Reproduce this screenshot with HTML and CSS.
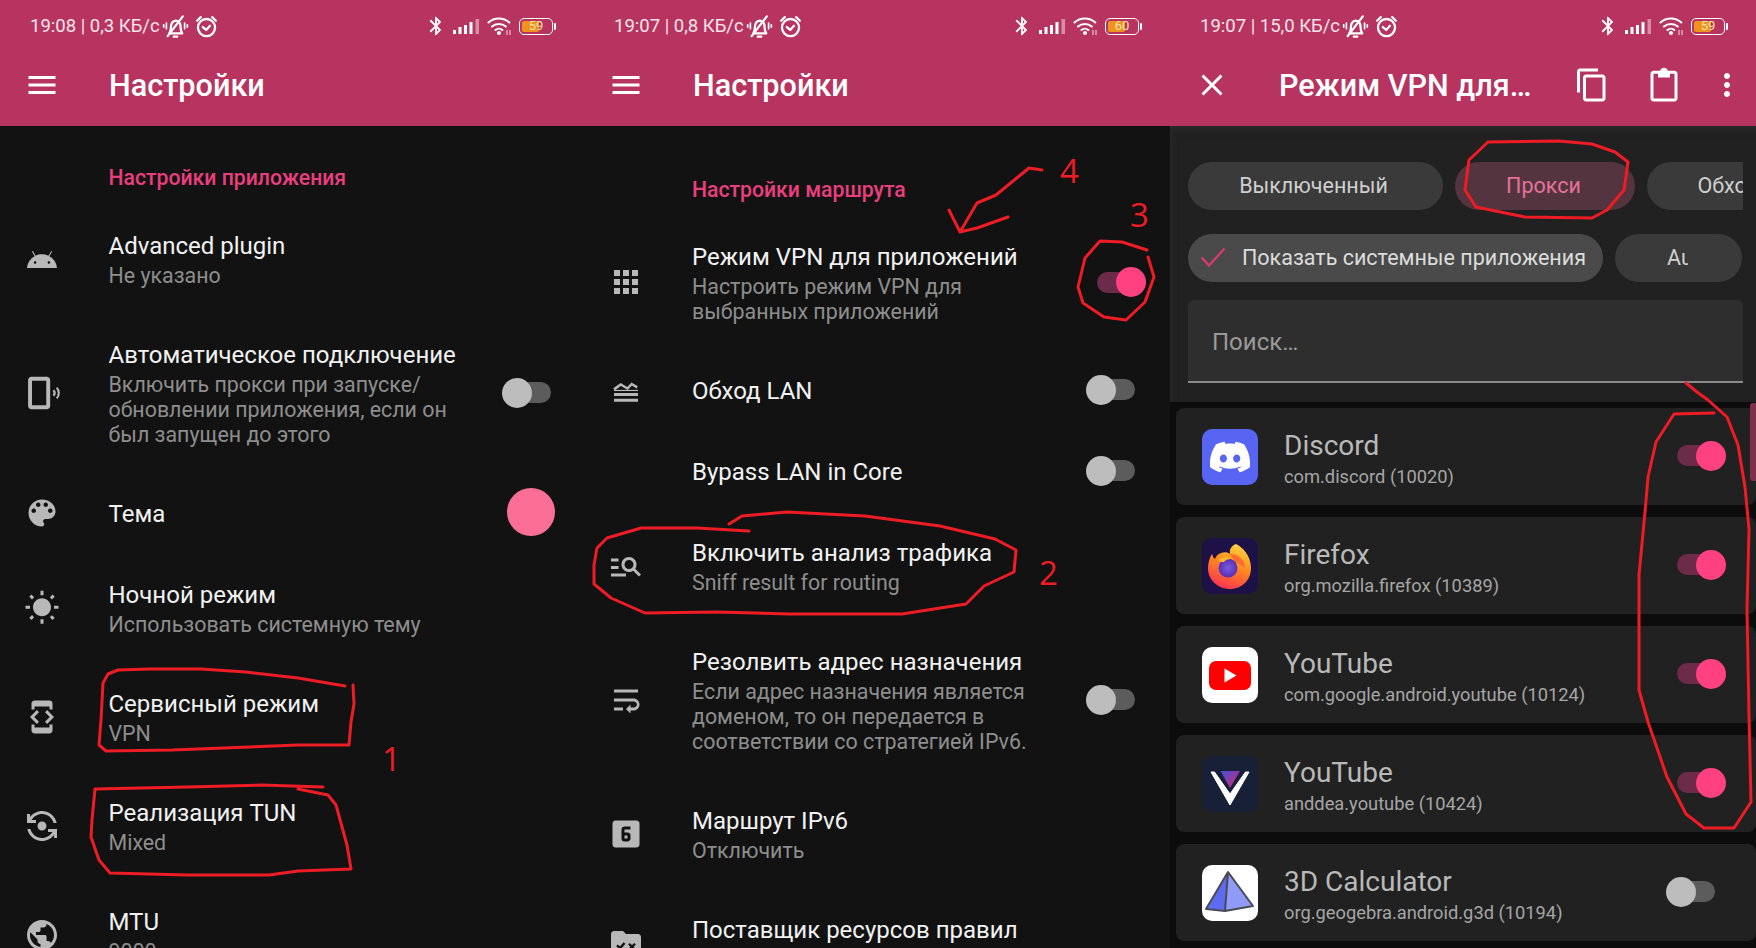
FILE: index.html
```html
<!DOCTYPE html>
<html lang="ru">
<head>
<meta charset="utf-8">
<title>Настройки</title>
<link rel="stylesheet" href="styles.css">
</head>
<body>
<svg class="defs" aria-hidden="true">
  <symbol id="i-menu" viewBox="0 0 24 24"><path d="M3 18h18v-2H3v2zm0-5h18v-2H3v2zm0-7v2h18V6H3z"/></symbol>
  <symbol id="i-bt" viewBox="0 0 24 24"><path d="M17.71 7.71L12 2h-1v7.59L6.41 5 5 6.41 10.59 12 5 17.59 6.41 19 11 14.41V22h1l5.71-5.71-4.3-4.29 4.3-4.29zM13 5.83l1.88 1.88L13 9.59V5.83zm1.88 10.46L13 18.17v-3.76l1.88 1.88z"/></symbol>
  <symbol id="i-belloff" viewBox="0 0 24 24"><g fill="none" stroke="#fff" stroke-width="2" stroke-linecap="round" stroke-linejoin="round"><path d="M6.5 18c1-1.500 1.400-3.200 1.400-5.200 0-3.300 1.800-5.600 4.300-6 2.700.2 4.300 2.500 4.300 5.800 0 2.200.3 3.900 1.500 5.400z"/><path d="M10.400 21h3.200"/><path d="M5 20.500 18.500 3"/><path d="M3.900 9v5M1.500 10.500v2M20.100 9v5M22.500 10.500v2" stroke-width="1.500"/></g></symbol>
  <symbol id="i-alarm" viewBox="0 0 24 24"><g fill="none" stroke="#fff" stroke-width="2.200" stroke-linecap="round" stroke-linejoin="round"><circle cx="12" cy="13" r="8.200"/><path d="M8.500 12.500l3.200 2.800 3.600-4"/><path d="M3 6.500 6.500 3M21 6.500 17.500 3"/></g></symbol>
  <symbol id="i-signal" viewBox="0 0 26 15"><path fill="#fff" d="M0 11h3v4H0zM5.500 8h3v7h-3zM11 6h3v9h-3zM16.500 3h3v12h-3z"/><path fill="#fff" opacity=".45" d="M22.500 0H26v15h-3.500z"/></symbol>
  <symbol id="i-wifi" viewBox="0 0 24 20"><g fill="none" stroke="#fff" stroke-width="2.100" stroke-linecap="round"><path d="M1.500 6.500c5.800-5.400 15-5.400 20.800 0"/><path d="M5 10.500c3.800-3.400 10-3.400 13.800 0"/><path d="M8.500 14c2-1.700 4.900-1.700 6.800 0"/></g><circle cx="12" cy="17" r="2" fill="#fff"/><path d="M20 14v5M23 14v5" stroke="#fff" stroke-width="1.200" opacity=".7"/></symbol>
  <symbol id="i-android" viewBox="0 0 24 24"><path d="M16.610 15.150C16.150 15.150 15.770 14.780 15.770 14.320S16.150 13.500 16.610 13.500H16.610C17.070 13.500 17.450 13.860 17.450 14.320C17.450 14.780 17.070 15.150 16.610 15.150M7.410 15.150C6.950 15.150 6.570 14.780 6.570 14.320C6.570 13.860 6.950 13.500 7.410 13.500H7.410C7.870 13.500 8.240 13.860 8.240 14.320C8.240 14.780 7.870 15.150 7.410 15.150M16.910 10.140L18.580 7.260C18.670 7.090 18.610 6.880 18.450 6.790C18.280 6.690 18.070 6.750 18 6.920L16.290 9.830C14.950 9.220 13.500 8.900 12 8.910C10.470 8.910 9 9.240 7.730 9.820L6.040 6.910C5.950 6.740 5.740 6.680 5.570 6.780C5.400 6.870 5.350 7.080 5.440 7.250L7.100 10.130C4.250 11.690 2.290 14.580 2 18H22C21.720 14.590 19.770 11.700 16.910 10.140H16.910Z"/></symbol>
  <symbol id="i-phone" viewBox="1 1.200 22 21.600"><path fill-rule="evenodd" d="M5.500 2h9.500c1 0 2 .9 2 2v16c0 1.100-1 2-2 2H5.500c-1 0-2-.9-2-2V4c0-1.100 1-2 2-2zm.4 2.500v15h8.700v-15z"/><path d="M19 10.300c.9 1 .9 2.400 0 3.400M21 8.700c1.700 1.900 1.700 4.700 0 6.600" fill="none" stroke="#b8b8b8" stroke-width="1.300"/></symbol>
  <symbol id="i-palette" viewBox="0 0 24 24"><path d="M12 3c-4.970 0-9 4.030-9 9s4.030 9 9 9c.830 0 1.500-.670 1.500-1.500 0-.390-.150-.740-.390-1.010-.230-.260-.380-.610-.380-.990 0-.830.670-1.500 1.500-1.500H16c2.760 0 5-2.240 5-5 0-4.420-4.030-8-9-8zm-5.500 9c-.830 0-1.500-.670-1.500-1.500S5.670 9 6.500 9 8 9.670 8 10.500 7.330 12 6.500 12zm3-4C8.670 8 8 7.330 8 6.500S8.670 5 9.500 5s1.500.670 1.500 1.500S10.330 8 9.500 8zm5 0c-.830 0-1.500-.670-1.500-1.500S13.670 5 14.500 5s1.500.670 1.500 1.500S15.330 8 14.500 8zm3 4c-.830 0-1.500-.670-1.500-1.500S16.670 9 17.500 9s1.500.670 1.500 1.500-.670 1.500-1.500 1.500z"/></symbol>
  <symbol id="i-sun" viewBox="0 0 24 24"><path d="M6.760 4.840l-1.800-1.790-1.410 1.410 1.790 1.790 1.420-1.410zM4 10.500H1v2h3v-2zm9-9.950h-2V3.500h2V.55zm7.450 3.910l-1.410-1.410-1.790 1.790 1.410 1.410 1.790-1.790zm-3.210 13.700l1.790 1.800 1.410-1.410-1.800-1.790-1.400 1.400zM20 10.500v2h3v-2h-3zm-8-5c-3.310 0-6 2.690-6 6s2.690 6 6 6 6-2.690 6-6-2.690-6-6-6zm-1 16.950h2V19.500h-2v2.950zm-7.450-3.910l1.410 1.410 1.790-1.800-1.410-1.410-1.790 1.800z"/></symbol>
  <symbol id="i-dev" viewBox="0 0 24 24"><path d="M7 5h10v2h2V3c0-1.100-.9-1.990-2-1.990L7 1c-1.100 0-2 .9-2 2v4h2V5zm8.410 11.590L20 12l-4.590-4.590L14 8.830 17.170 12 14 15.170l1.410 1.420zM10 15.170L6.830 12 10 8.830 8.590 7.410 4 12l4.590 4.590L10 15.170zM17 19H7v-2H5v4c0 1.100.9 2 2 2h10c1.100 0 2-.9 2-2v-4h-2v2z"/></symbol>
  <symbol id="i-flip" viewBox="0 0 24 24"><path d="M9,12c0,1.660,1.340,3,3,3s3-1.340,3-3s-1.340-3-3-3S9,10.340,9,12z M8,10V8H5.090C6.470,5.610,9.050,4,12,4c3.720,0,6.850,2.560,7.740,6h2.060 c-0.930-4.560-4.960-8-9.800-8C8.730,2,5.820,3.580,4,6.010V4H2v6H8z M16,14v2h2.910c-1.380,2.390-3.960,4-6.910,4c-3.720,0-6.850-2.560-7.740-6H2.200 c0.930,4.560,4.960,8,9.800,8c3.270,0,6.180-1.580,8-4.010V20h2v-6H16z"/></symbol>
  <symbol id="i-globe" viewBox="0 0 24 24"><path d="M12 2C6.480 2 2 6.480 2 12s4.480 10 10 10 10-4.480 10-10S17.520 2 12 2zm-1 17.930c-3.950-.490-7-3.850-7-7.930 0-.620.080-1.210.210-1.790L9 15v1c0 1.100.9 2 2 2v1.930zm6.900-2.540c-.260-.810-1-1.390-1.900-1.390h-1v-3c0-.550-.450-1-1-1H8v-2h2c.550 0 1-.450 1-1V7h2c1.100 0 2-.9 2-2v-.410c2.930 1.190 5 4.060 5 7.410 0 2.080-.8 3.970-2.100 5.390z"/></symbol>
  <symbol id="i-apps" viewBox="0 0 24 24"><path d="M4 8h4V4H4v4zm6 12h4v-4h-4v4zm-6 0h4v-4H4v4zm0-6h4v-4H4v4zm6 0h4v-4h-4v4zm6-10v4h4V4h-4zm-6 4h4V4h-4v4zm6 6h4v-4h-4v4zm0 6h4v-4h-4v4z"/></symbol>
  <symbol id="i-lan" viewBox="0 0 24 24"><path d="M4 14h16v2H4zM4 17.800h16v2H4z"/><path d="M4 11.600 8.500 8.300l4.500 2.700 2.800-3 3.700 2.200" fill="none" stroke="#b8b8b8" stroke-width="1.700"/><path d="M4 12.300h16" stroke="#b8b8b8" stroke-width=".8"/></symbol>
  <symbol id="i-sniff" viewBox="0 0 24 24"><path d="M7 9H2V7h5v2zm0 3H2v2h5v-2zm13.590 7l-3.830-3.830c-.8.520-1.740.830-2.760.830-2.760 0-5-2.240-5-5s2.240-5 5-5 5 2.240 5 5c0 1.020-.310 1.960-.830 2.750L22 17.590 20.590 19zM17 11c0-1.650-1.350-3-3-3s-3 1.350-3 3 1.350 3 3 3 3-1.350 3-3zM2 19h10v-2H2v2z"/></symbol>
  <symbol id="i-wrap" viewBox="0 0 24 24"><path d="M4 19h6v-2H4v2zM20 5H4v2h16V5zm-3 6H4v2h13.250c1.100 0 2 .9 2 2s-.9 2-2 2H15v-2l-3 3 3 3v-2h2c2.210 0 4-1.790 4-4s-1.790-4-4-4z"/></symbol>
  <symbol id="i-six" viewBox="0 0 24 24"><path d="M19,3H5C3.900,3 3,3.900 3,5V19C3,20.100 3.900,21 5,21H19C20.100,21 21,20.100 21,19V5C21,3.900 20.100,3 19,3M15,9H11V11H13A2,2 0 0,1 15,13V15C15,16.110 14.100,17 13,17H11A2,2 0 0,1 9,15V9C9,7.890 9.900,7 11,7H15V9M11,15H13V13H11V15Z"/></symbol>
  <symbol id="i-folder" viewBox="0 0 24 24"><path d="M10 4H4c-1.100 0-2 .9-2 2v12c0 1.100.9 2 2 2h16c1.100 0 2-.9 2-2V8c0-1.100-.9-2-2-2h-8l-2-2z"/><path d="M6 13.500l2 2 3-3.500M14 12.500l4 4M18 12.500l-4 4" fill="none" stroke="#121212" stroke-width="1.600"/></symbol>
</svg>

<main class="app">

  <section class="panel">
    <header class="head">
      <div class="status">
        <span class="status-text">19:08 | 0,3 КБ/с</span>
        <svg class="st-bell"><use href="#i-belloff"/></svg>
        <svg class="st-alarm"><use href="#i-alarm"/></svg>
        <div class="status-right">
          <svg class="st-bt"><use href="#i-bt"/></svg>
          <svg class="st-signal"><use href="#i-signal"/></svg>
          <svg class="st-wifi"><use href="#i-wifi"/></svg>
          <div class="batt"><div class="batt-body"><div class="batt-fill fill-59"></div><span class="batt-num">59</span></div><div class="batt-nub"></div></div>
        </div>
      </div>
      <div class="toolbar">
        <svg class="tb-icon"><use href="#i-menu"/></svg>
        <h1 class="tb-title">Настройки</h1>
      </div>
    </header>
    <h2 class="section sec-app">Настройки приложения</h2>
    <div class="row">
      <svg class="ico"><use href="#i-android"/></svg>
      <div class="txt"><div class="t">Advanced plugin</div><div class="s">Не указано</div></div>
    </div>
    <div class="row">
      <svg class="ico"><use href="#i-phone"/></svg>
      <div class="txt"><div class="t">Автоматическое подключение</div><div class="s">Включить прокси при запуске/<br>обновлении приложения, если он<br>был запущен до этого</div></div>
      <div class="switch"><span class="track"></span><span class="knob"></span></div>
    </div>
    <div class="row">
      <svg class="ico"><use href="#i-palette"/></svg>
      <div class="txt"><div class="t">Тема</div></div>
      <div class="swatch"></div>
    </div>
    <div class="row">
      <svg class="ico"><use href="#i-sun"/></svg>
      <div class="txt"><div class="t">Ночной режим</div><div class="s">Использовать системную тему</div></div>
    </div>
    <div class="row">
      <svg class="ico"><use href="#i-dev"/></svg>
      <div class="txt"><div class="t">Сервисный режим</div><div class="s">VPN</div></div>
    </div>
    <div class="row">
      <svg class="ico"><use href="#i-flip"/></svg>
      <div class="txt"><div class="t">Реализация TUN</div><div class="s">Mixed</div></div>
    </div>
    <div class="row">
      <svg class="ico"><use href="#i-globe"/></svg>
      <div class="txt"><div class="t">MTU</div><div class="s">9000</div></div>
    </div>
  </section>

  <section class="panel panel-wide panel-route">
    <header class="head">
      <div class="status">
        <span class="status-text">19:07 | 0,8 КБ/с</span>
        <svg class="st-bell"><use href="#i-belloff"/></svg>
        <svg class="st-alarm"><use href="#i-alarm"/></svg>
        <div class="status-right">
          <svg class="st-bt"><use href="#i-bt"/></svg>
          <svg class="st-signal"><use href="#i-signal"/></svg>
          <svg class="st-wifi"><use href="#i-wifi"/></svg>
          <div class="batt"><div class="batt-body"><div class="batt-fill fill-60"></div><span class="batt-num">60</span></div><div class="batt-nub"></div></div>
        </div>
      </div>
      <div class="toolbar">
        <svg class="tb-icon"><use href="#i-menu"/></svg>
        <h1 class="tb-title">Настройки</h1>
      </div>
    </header>
    <h2 class="section sec-route">Настройки маршрута</h2>
    <div class="row">
      <svg class="ico"><use href="#i-apps"/></svg>
      <div class="txt"><div class="t">Режим VPN для приложений</div><div class="s">Настроить режим VPN для<br>выбранных приложений</div></div>
      <div class="switch on"><span class="track"></span><span class="knob"></span></div>
    </div>
    <div class="row">
      <svg class="ico"><use href="#i-lan"/></svg>
      <div class="txt"><div class="t">Обход LAN</div></div>
      <div class="switch"><span class="track"></span><span class="knob"></span></div>
    </div>
    <div class="row">
      <svg class="ico"></svg>
      <div class="txt"><div class="t">Bypass LAN in Core</div></div>
      <div class="switch"><span class="track"></span><span class="knob"></span></div>
    </div>
    <div class="row">
      <svg class="ico"><use href="#i-sniff"/></svg>
      <div class="txt"><div class="t">Включить анализ трафика</div><div class="s">Sniff result for routing</div></div>
    </div>
    <div class="row">
      <svg class="ico"><use href="#i-wrap"/></svg>
      <div class="txt"><div class="t">Резолвить адрес назначения</div><div class="s">Если адрес назначения является<br>доменом, то он передается в<br>соответствии со стратегией IPv6.</div></div>
      <div class="switch"><span class="track"></span><span class="knob"></span></div>
    </div>
    <div class="row">
      <svg class="ico"><use href="#i-six"/></svg>
      <div class="txt"><div class="t">Маршрут IPv6</div><div class="s">Отключить</div></div>
    </div>
    <div class="row">
      <svg class="ico"><use href="#i-folder"/></svg>
      <div class="txt"><div class="t">Поставщик ресурсов правил</div><div class="s">Встроенный</div></div>
    </div>
  </section>

  <section class="panel panel-wide panel-apps">
    <header class="head">
      <div class="status">
        <span class="status-text">19:07 | 15,0 КБ/с</span>
        <svg class="st-bell"><use href="#i-belloff"/></svg>
        <svg class="st-alarm"><use href="#i-alarm"/></svg>
        <div class="status-right">
          <svg class="st-bt"><use href="#i-bt"/></svg>
          <svg class="st-signal"><use href="#i-signal"/></svg>
          <svg class="st-wifi"><use href="#i-wifi"/></svg>
          <div class="batt"><div class="batt-body"><div class="batt-fill fill-59"></div><span class="batt-num">59</span></div><div class="batt-nub"></div></div>
        </div>
      </div>
      <div class="toolbar">
        <svg class="tb-icon" viewBox="0 0 24 24"><path d="M19 6.410L17.590 5 12 10.590 6.410 5 5 6.410 10.590 12 5 17.590 6.410 19 12 13.410 17.590 19 19 17.590 13.410 12z"/></svg>
        <h1 class="tb-title tb-title-apps">Режим VPN для…</h1>
        <svg class="tb-icon act-copy" viewBox="0 0 24 24"><path d="M16 1H4c-1.100 0-2 .9-2 2v14h2V3h12V1zm3 4H8c-1.100 0-2 .9-2 2v14c0 1.100.9 2 2 2h11c1.100 0 2-.9 2-2V7c0-1.100-.9-2-2-2zm0 16H8V7h11v14z"/></svg>
        <svg class="tb-icon act-paste" viewBox="0 0 24 24"><path d="M19 2.500h-4.400C14.200 1.300 13.200.5 12 .5s-2.200.8-2.600 2H5c-1.100 0-2 .9-2 2V21c0 1.100.9 2 2 2h14c1.100 0 2-.9 2-2V4.500c0-1.100-.9-2-2-2zM19 21H5V4.500h3V7h8V4.500h3z"/></svg>
        <svg class="tb-icon act-more" viewBox="0 0 24 24"><path d="M12 8c1.100 0 2-.9 2-2s-.9-2-2-2-2 .9-2 2 .9 2 2 2zm0 2c-1.100 0-2 .9-2 2s.9 2 2 2 2-.9 2-2-.9-2-2-2zm0 6c-1.100 0-2 .9-2 2s.9 2 2 2 2-.9 2-2-.9-2-2-2z"/></svg>
      </div>
    </header>

    <div class="filters">
      <div class="chips">
        <div class="chip chip-off">Выключенный</div>
        <div class="chip chip-proxy">Прокси</div>
        <div class="chip chip-bypass">Обход</div>
      </div>
      <div class="chips chips-2">
        <div class="chip chip-sys">
          <svg class="chk" viewBox="0 0 26 20"><path d="M1.500 10.500 9 18.500 24.500 1.500"/></svg>
          Показать системные приложения
        </div>
        <div class="chip chip-au"><span class="clip">Auto</span></div>
      </div>
      <div class="search">Поиск…</div>
    </div>

    <div class="apps">
      <article class="card">
        <svg class="app-ico" viewBox="0 0 56 56"><rect width="56" height="56" rx="10" fill="#5865f2"/><g transform="translate(8 8) scale(1.670)"><path fill="#fff" d="M20.317 4.3698a19.7913 19.7913 0 00-4.8851-1.5152.0741.0741 0 00-.0785.0371c-.211.3753-.4447.8648-.6083 1.2495-1.8447-.2762-3.68-.2762-5.4868 0-.1636-.3933-.4058-.8742-.6177-1.2495a.077.077 0 00-.0785-.037 19.7363 19.7363 0 00-4.8852 1.515.0699.0699 0 00-.0321.0277C.5334 9.0458-.319 13.5799.0992 18.0578a.0824.0824 0 00.0312.0561c2.0528 1.5076 4.0413 2.4228 5.9929 3.0294a.0777.0777 0 00.0842-.0276c.4616-.6304.8731-1.2952 1.226-1.9942a.076.076 0 00-.0416-.1057c-.6528-.2476-1.2743-.5495-1.8722-.8923a.077.077 0 01-.0076-.1277c.1258-.0943.2517-.1923.3718-.2914a.0743.0743 0 01.0776-.0105c3.9278 1.7933 8.18 1.7933 12.0614 0a.0739.0739 0 01.0785.0095c.1202.099.246.1981.3728.2924a.077.077 0 01-.0066.1276 12.2986 12.2986 0 01-1.873.8914.0766.0766 0 00-.0407.1067c.3604.698.7719 1.3628 1.225 1.9932a.076.076 0 00.0842.0286c1.961-.6067 3.9495-1.5219 6.0023-3.0294a.077.077 0 00.0313-.0552c.5004-5.177-.8382-9.6739-3.5485-13.6604a.061.061 0 00-.0312-.0286zM8.02 15.3312c-1.1825 0-2.1569-1.0857-2.1569-2.419 0-1.3332.9555-2.4189 2.157-2.4189 1.2108 0 2.1757 1.0952 2.1568 2.419 0 1.3332-.9555 2.4189-2.1569 2.4189zm7.9748 0c-1.1825 0-2.1569-1.0857-2.1569-2.419 0-1.3332.9554-2.4189 2.1569-2.4189 1.2108 0 2.1757 1.0952 2.1568 2.419 0 1.3332-.946 2.4189-2.1568 2.4189Z"/></g></svg>
        <div class="app-txt"><div class="app-name">Discord</div><div class="app-pkg">com.discord (10020)</div></div>
        <div class="switch on"><span class="track"></span><span class="knob"></span></div>
      </article>
      <article class="card">
        <svg class="app-ico" viewBox="0 0 56 56"><defs><linearGradient id="ff1" x1="0.700" y1="0" x2="0.300" y2="1"><stop offset="0" stop-color="#ffd23f"/><stop offset=".45" stop-color="#ff8a1e"/><stop offset="1" stop-color="#ff2f55"/></linearGradient><radialGradient id="ff2"><stop offset="0" stop-color="#7a5be0"/><stop offset="1" stop-color="#5a2fb0"/></radialGradient></defs><rect width="56" height="56" rx="10" fill="#1d1147"/><path fill="url(#ff1)" d="M34 6c6 3 15 11 15 24 0 12-9 21-21 21S6 42 6 30c0-6 2-11 4-14 1 2 1 4 3 5 1-3 3-5 6-6 3-1 7-1 9 1-1-4 1-8 6-10z"/><path fill="#ff6b2c" d="M28 16c8 0 15 6 15 14-3-3-6-5-9-5-2-3-4-5-6-9z"/><circle cx="26" cy="30" r="9.500" fill="url(#ff2)"/><path fill="#ffb52e" d="M16 22c4-3 9-3 13-1-3 0-6 1-7 3-3 0-4 0-6-2z"/></svg>
        <div class="app-txt"><div class="app-name">Firefox</div><div class="app-pkg">org.mozilla.firefox (10389)</div></div>
        <div class="switch on"><span class="track"></span><span class="knob"></span></div>
      </article>
      <article class="card">
        <svg class="app-ico" viewBox="0 0 56 56"><rect width="56" height="56" rx="10" fill="#fff"/><rect x="7" y="14" width="42" height="29" rx="7" fill="#f00"/><path d="M22.500 21.500 34.500 28.500 22.500 35.500z" fill="#fff"/></svg>
        <div class="app-txt"><div class="app-name">YouTube</div><div class="app-pkg">com.google.android.youtube (10124)</div></div>
        <div class="switch on"><span class="track"></span><span class="knob"></span></div>
      </article>
      <article class="card">
        <svg class="app-ico" viewBox="0 0 56 56"><defs><linearGradient id="vg" x1="0" y1="0" x2="1" y2="1"><stop offset="0" stop-color="#3f52d8"/><stop offset="1" stop-color="#e0226c"/></linearGradient></defs><rect width="56" height="56" rx="10" fill="#172036"/><path d="M18.500 15H38L28 32z" fill="url(#vg)"/><path d="M9 16 28 49 47 16 43.500 16 28 38 12.500 16z" fill="#fff" stroke="#fff" stroke-linejoin="round"/></svg>
        <div class="app-txt"><div class="app-name">YouTube</div><div class="app-pkg">anddea.youtube (10424)</div></div>
        <div class="switch on"><span class="track"></span><span class="knob"></span></div>
      </article>
      <article class="card">
        <svg class="app-ico" viewBox="0 0 56 56"><rect width="56" height="56" rx="10" fill="#fff"/><path d="M26 7 4 44 23 46z" fill="#5d6bf0"/><path d="M26 7 23 46 51 41z" fill="#8f9bf6"/><path d="M26 7 4 44 23 46 51 41zM26 7 23 46" fill="none" stroke="#4a4a55" stroke-width="2" stroke-linejoin="round"/></svg>
        <div class="app-txt"><div class="app-name">3D Calculator</div><div class="app-pkg">org.geogebra.android.g3d (10194)</div></div>
        <div class="switch"><span class="track"></span><span class="knob"></span></div>
      </article>
    </div>
  </section>

  <div class="scrollthumb"></div>

  <svg class="marks" viewBox="0 0 1756 948" aria-hidden="true">
    <g class="ink">
      <path d="M345 686 298 678 246 672 201 669 149 669 118 670 108 674 103 683 101 720 99 745 106 751 172 750 224 748 298 745 349 745 351 722 354 704 353 685"/>
      <path d="M323 787 261 785 187 787 95 789 92 820 91 837 99 860 110 873 187 875 269 875 298 871 351 869 347 845 336 805 328 795 298 789"/>
      <path d="M749 531 697 528 641 528 607 538 597 548 594 565 594 584 611 598 645 613 716 612 790 614 902 614 966 604 984 586 1014 572 1016 550 995 539 940 526 865 516 787 512 742 516 729 524"/>
      <path d="M1147 250 1122 242 1100 241 1085 258 1078 287 1083 303 1104 317 1126 320 1145 302 1154 277 1148 257"/>
      <path d="M1042 170 1029 168 1018 177 996 195 977 203 960 232M949 210 960 232 977 228 1008 217"/>
      <path d="M1615 152 1592 144 1559 141 1488 142 1469 160 1465 190 1476 207 1525 217 1592 218 1607 210 1624 190 1628 162 1615 152"/>
      <path d="M1686 383 1697 392 1708 400 1727 417 1738 445 1745 487 1749 529 1747 610 1749 715 1751 802 1734 828 1704 828 1686 814 1667 777 1648 722 1639 690 1639 575 1645 512 1648 477 1656 442 1674 414 1714 413"/>
    </g>
    <text class="num" x="382" y="771">1</text>
    <text class="num" x="1039" y="585">2</text>
    <text class="num" x="1130" y="227">3</text>
    <text class="num" x="1060" y="183">4</text>
  </svg>
</main>
</body>
</html>
```

FILE: styles.css
```css
* { box-sizing: border-box; }
html, body { margin: 0; padding: 0; background: #121212; }
body { font-family: Roboto, "Noto Sans", sans-serif; color: #fff; overflow: hidden; }
.defs { position: absolute; width: 0; height: 0; }

.app { position: relative; display: flex; width: 1756px; height: 948px; overflow: hidden; }
.panel { width: 584px; height: 948px; overflow: hidden; background: #121212; flex: none; }
.panel-wide { width: 586px; }
.panel-apps { background: #0c0c0c; }

/* header */
.head { height: 126px; background: #b73460; }
.status { display: flex; align-items: center; height: 52px; padding: 0 28px 0 30px; }
.status-text { font-size: 18.500px; line-height: 22px; color: #f6e4ea; }
.status svg { fill: #fff; flex: none; }
.st-bell { width: 27px; height: 27px; margin-left: 2px; }
.st-alarm { width: 25px; height: 25px; margin-left: 5px; }
.status-right { display: flex; align-items: center; margin-left: auto; }
.st-bt { width: 22px; height: 24px; margin-right: 6px; }
.st-signal { width: 26px; height: 15px; margin-right: 7px; }
.st-wifi { width: 26px; height: 20px; margin-right: 7px; }
.batt { display: flex; align-items: center; }
.batt-body { position: relative; width: 34px; height: 17px; border: 1.500px solid #fff; border-radius: 5px; padding: 2px; }
.batt-fill { height: 100%; background: #f0921e; border-radius: 2px; }
.fill-59 { width: 59%; }
.fill-60 { width: 60%; }
.batt-num { position: absolute; left: 0; right: 0; top: -1px; font-size: 13px; line-height: 16px; text-align: center; color: #f6e2a8; }
.batt-nub { width: 2px; height: 7px; margin-left: 1px; background: #fff; border-radius: 1px; }

.toolbar { display: flex; align-items: center; height: 65px; padding-left: 24px; }
.tb-icon { width: 36px; height: 36px; fill: #fff; flex: none; }
.tb-title { margin: 2px 0 0 49px; font-size: 30.600px; line-height: 40px; font-weight: 500; color: #fff; white-space: nowrap; }
.tb-title-apps { width: 297px; }
.act-copy { margin-left: -2px; }
.act-paste { margin-left: 36px; }
.act-more { margin-left: 27px; }

/* settings list */
.section { margin: 0; font-size: 21.200px; line-height: 26px; font-weight: 500; color: #ea3f7e; padding-left: 108.500px; }
.sec-app { padding-top: 39px; padding-bottom: 15px; }
.sec-route { padding-top: 51px; padding-bottom: 14px; padding-left: 108px; }

.row { display: flex; align-items: center; padding: 0 22px 0 24px; }
.panel-route .row { padding-right: 24px; }
.ico { width: 36px; height: 36px; flex: none; margin: 0 48.500px 4px 0; fill: #b8b8b8; }
.panel-route .ico { margin-right: 48px; }
.txt { flex: 1; min-width: 0; padding: 27px 0; }
.t { font-size: 24px; line-height: 27px; color: #f2f2f2; white-space: nowrap; }
.s { margin-top: 3px; font-size: 21.400px; line-height: 25px; color: #8e8e8e; white-space: nowrap; }

/* switch */
.switch { position: relative; width: 60px; height: 30px; flex: none; margin-bottom: 4px; }
.track { position: absolute; left: 11px; top: 4.500px; width: 38px; height: 21px; border-radius: 11px; background: #5c5c5c; }
.knob { position: absolute; left: 0; top: 0; width: 30px; height: 30px; border-radius: 50%; background: #bdbdbd; }
.switch.on .track { background: #6b2b49; }
.switch.on .knob { left: 30px; background: #ff4081; }

.swatch { width: 48px; height: 48px; flex: none; border-radius: 50%; background: #fb6f97; margin: 0 7px 5px 0; }

/* filters */
.filters { height: 276px; padding: 36px 13px 0 18px; background: #212121; box-shadow: inset 6px 8px 6px -4px #2a2a2a; }
.chips { display: flex; gap: 12px; height: 48px; overflow: hidden; }
.chips-2 { margin-top: 24px; }
.chip { display: flex; align-items: center; justify-content: center; flex: none; height: 48px; padding-bottom: 2px; border-radius: 24px; font-size: 21.500px; color: #cfcfcf; background: #3a3a3a; white-space: nowrap; }
.chip-off { width: 255px; padding-right: 4px; }
.chip-proxy { width: 180px; padding-right: 3px; background: #54353f; color: #e5719a; }
.chip-bypass { width: 150px; padding-right: 38px; padding-left: 0; justify-content: flex-end; }
.chip-sys { width: 415px; background: #4a4a4a; justify-content: flex-start; padding-left: 12px; color: #dcdcdc; gap: 16px; }
.chk { width: 26px; height: 20px; fill: none; stroke: #dd3a72; stroke-width: 2.200px; flex: none; }
.chip-au { width: 127px; padding-right: 2px; }
.clip { display: block; width: 21px; overflow: hidden; }
.search { height: 83px; margin-top: 18px; padding: 2px 24px 0; display: flex; align-items: center; background: #2e2e2e; border-bottom: 2px solid #8a8a8a; border-radius: 6px 6px 0 0; font-size: 24px; color: #9a9a9a; }

/* app list */
.apps { display: flex; flex-direction: column; gap: 12px; margin: 6px 0 0 6px; }
.card { display: flex; align-items: center; height: 97px; padding: 0 30px 0 26px; background: #212121; border-radius: 8px; }
.app-ico { width: 56px; height: 56px; flex: none; }
.app-txt { flex: 1; margin-left: 26px; padding-top: 7px; min-width: 0; }
.app-name { font-size: 28px; line-height: 30px; color: #b9b9b9; }
.app-pkg { margin-top: 3px; font-size: 18.300px; line-height: 26px; color: #a6a6a6; white-space: nowrap; }
.card .switch { margin-bottom: 2px; }

.scrollthumb { position: absolute; right: 0; top: 403px; width: 6px; height: 78px; background: #7f2f4c; border-radius: 3px 0 0 3px; }

/* red annotations drawn over the screenshot */
.marks { position: absolute; left: 0; top: 0; width: 1756px; height: 948px; pointer-events: none; }
.ink path { fill: none; stroke: #ee1c25; stroke-width: 3px; stroke-linejoin: round; stroke-linecap: round; }
.num { font-family: "Open Sans", sans-serif; font-size: 33px; fill: #ee1c25; }
```
